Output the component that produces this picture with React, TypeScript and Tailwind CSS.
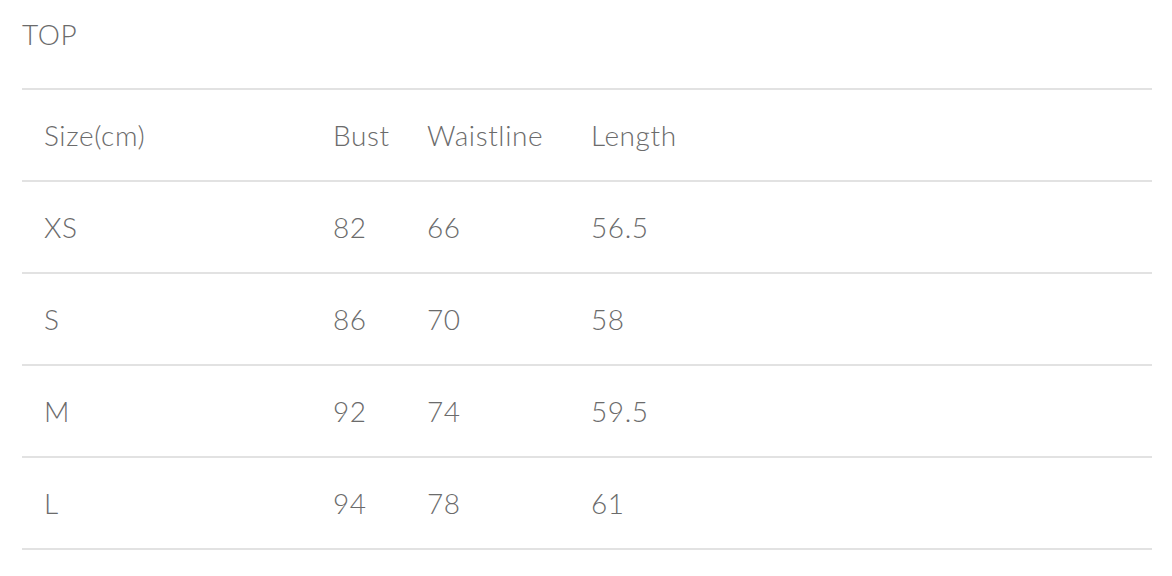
import React from "react";

const rows = [
  { size: "XS", bust: "82", waist: "66", length: "56.5" },
  { size: "S", bust: "86", waist: "70", length: "58" },
  { size: "M", bust: "92", waist: "74", length: "59.5" },
  { size: "L", bust: "94", waist: "78", length: "61" },
];

const Row = ({ cells }: { cells: string[] }) => (
  <div className="grid grid-cols-[289px_94px_164px_1fr] h-[92px] items-center border-b-2 border-[#e2e2e2]">
    {cells.map((c, i) => (
      <div key={i} className="px-[22px] whitespace-nowrap">
        {c}
      </div>
    ))}
  </div>
);

export default function App() {
  return (
    <div
      className="bg-white w-[1172px] h-[576px] px-[22px] text-[#6b6b6b] text-[28px] font-light leading-none tracking-[0.6px]"
      style={{ fontFamily: "Lato, 'Noto Sans', sans-serif" }}
    >
      <div className="h-[88px] pt-[20px]">TOP</div>
      <div className="w-[1130px] border-t-2 border-[#e2e2e2]">
        <Row cells={["Size(cm)", "Bust", "Waistline", "Length"]} />
        {rows.map((r) => (
          <Row key={r.size} cells={[r.size, r.bust, r.waist, r.length]} />
        ))}
      </div>
    </div>
  );
}
